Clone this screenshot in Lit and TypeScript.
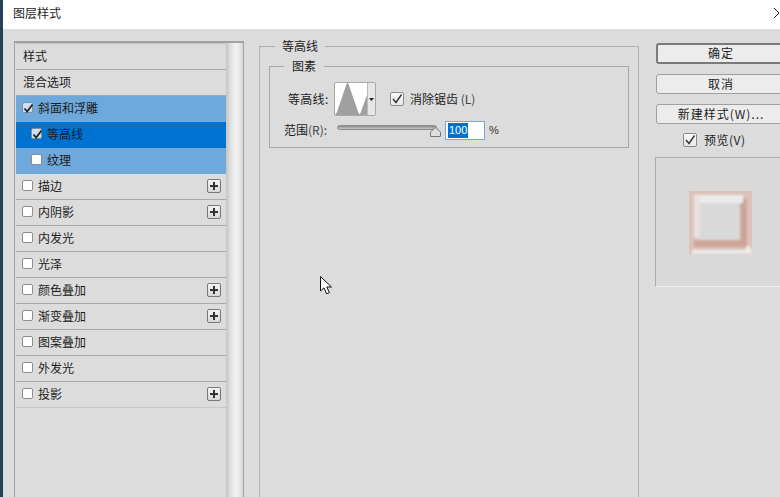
import { LitElement, html, css, svg } from "lit";
import { customElement } from "lit/decorators.js";

type Row = { label: string; check?: boolean; checked?: boolean; nested?: boolean; plus?: boolean; tone?: string };

const ROWS: Row[] = [
  { label: "样式" },
  { label: "混合选项" },
  { label: "斜面和浮雕", check: true, checked: true, tone: "sel" },
  { label: "等高线", check: true, checked: true, nested: true, tone: "active" },
  { label: "纹理", check: true, nested: true, tone: "sel" },
  { label: "描边", check: true, plus: true },
  { label: "内阴影", check: true, plus: true },
  { label: "内发光", check: true },
  { label: "光泽", check: true },
  { label: "颜色叠加", check: true, plus: true },
  { label: "渐变叠加", check: true, plus: true },
  { label: "图案叠加", check: true },
  { label: "外发光", check: true },
  { label: "投影", check: true, plus: true },
];

const tick = svg`<path d="M2.5 6.5 L5.2 9.5 L10.5 2.5" fill="none" stroke="#222" stroke-width="1.8"/>`;

@customElement("app-root")
export class AppRoot extends LitElement {
  static styles = css`
    :host {
      display: flex;
      width: 780px;
      height: 497px;
      overflow: hidden;
      position: relative;
      font: 12px/16px "Noto Sans CJK SC", "Liberation Sans", sans-serif;
      color: #1c1c1c;
      background: #dcdcdc;
    }
    .strip { width: 3px; flex: none; background: #24405c; }
    .main { flex: 1; min-width: 0; display: flex; flex-direction: column; }
    .title {
      height: 29px; flex: none; background: #fff; display: flex; align-items: center;
      justify-content: space-between; padding-left: 10px; padding-bottom: 3px; box-sizing: border-box;
    }
    .close { width: 6px; height: 12px; flex: none; }
    .body { flex: 1; display: flex; align-items: stretch; padding: 12px 0 0 11px; min-height: 0; }

    .list {
      width: 230px; flex: none; box-sizing: border-box; border: solid #a2a2a2; border-width: 2px 1px 0 1px;
      padding-left: 1px; display: flex; background: #dcdcdc;
    }
    .rows { width: 210px; flex: none; border-top: 1px solid #c2c2c2; }
    .scroll { flex: 1; background: linear-gradient(90deg, #c4c4c4 0, #dedede 25%, #f2f2f2 55%, #e4e4e4 85%, #d4d4d4 100%); }
    .row {
      height: 26px; box-sizing: border-box; border-bottom: 1px solid #a8a8a8;
      display: flex; align-items: center; padding: 0 5px 2px 6px; gap: 5px;
    }
    .row:last-child { border-bottom-color: #c8c8c8; }
    .row.nested { padding-left: 15px; }
    .row.plain { padding-left: 7px; }
    .row.sel { background: #6fa8da; border-bottom-color: #6fa8da; }
    .row.sel.top { border-bottom-color: #8aa6c0; }
    .row.active { background: #0072d2; border-bottom-color: #0072d2; }
    .row .lbl { flex: 1; }
    .cb {
      width: 11px; height: 11px; flex: none; box-sizing: border-box; border: 1px solid #8e8e8e; border-radius: 2px;
      background: #fff; display: flex;
    }
    .cb.on { background: #cfe0f2; border-color: #7e8fa2; }
    .cb svg { width: 11px; height: 11px; margin: -1px; flex: none; }
    .plus {
      width: 14px; height: 14px; flex: none; box-sizing: border-box; border: 1px solid #777; border-radius: 2px;
      background: linear-gradient(#f4f4f4, #d6d6d6); display: flex; align-items: center; justify-content: center;
    }
    .plus svg { width: 8px; height: 8px; }

    .panel { width: 380px; margin-left: 15px; flex: none; }
    fieldset { margin: 0; min-width: 0; box-sizing: border-box; border: 1px solid #b0b0b0; }
    .outer { height: 600px; margin-top: -3px; padding: 4px 9px 0; }
    .outer legend { margin-left: 6px; padding: 0 7px; height: 16px; }
    .inner { height: 90px; padding: 0 0 0 14px; border-color: #a8a8a8; }
    .inner legend { margin-left: 0; padding: 0 8px; height: 16px; }
    .line1 { display: flex; align-items: center; height: 34px; margin-top: 8px; }
    .lab1 { width: 41px; margin-left: 4px; letter-spacing: 0.3px; }
    .swatch {
      width: 42px; height: 34px; margin-left: 5px; box-sizing: border-box; border: 1px solid #a8a8a8; border-radius: 2px;
      display: flex; background: #fff; flex: none;
    }
    .swatch .g { width: 32px; height: 32px; flex: none; }
    .swatch .arrow { flex: 1; background: #e6e6e6; display: flex; align-items: center; justify-content: center; border-left: 1px solid #bbb; }
    .tri { width: 5px; height: 3px; flex: none; }
    .big {
      width: 14px; height: 14px; flex: none; box-sizing: border-box; border: 1px solid #8a8a8a; border-radius: 2px;
      background: linear-gradient(#fafafa, #e8e8e8); display: flex;
    }
    .big svg { width: 12px; height: 12px; }
    .aa { display: flex; align-items: center; gap: 6px; margin-left: 14px; }
    .latin { color: #444; }
    .line2 { display: flex; align-items: center; height: 20px; margin-top: 4px; }
    .lab2 { width: 53px; }
    .slider { width: 104px; height: 15px; flex: none; position: relative; }
    .track {
      position: absolute; left: 0; right: 4px; top: 2px; height: 5px; border-radius: 3px; box-sizing: border-box;
      background: linear-gradient(#8a8a8a, #c4c4c4); border: 1px solid #8c8c8c;
    }
    .thumb { position: absolute; right: 0; top: 4px; width: 11px; height: 10px; }
    .num {
      width: 40px; height: 19px; margin-left: 4px; flex: none; box-sizing: border-box; border: 1px solid #7fa6cc;
      background: #fff; padding: 1px 0 0 2px; line-height: 15px; font-family: "Liberation Sans", sans-serif; font-size: 11px;
    }
    .num span { background: #0072d2; color: #fff; display: inline-block; padding: 0 1px; }
    .pct { margin-left: 4px; font-family: "Liberation Sans", sans-serif; font-size: 11px; color: #333; }

    .side { margin-left: 17px; width: 130px; flex: none; display: flex; flex-direction: column; margin-top: 2px; }
    .btn {
      height: 20px; box-sizing: border-box; border: 1px solid #a0a0a0; border-radius: 3px; background: #ececec;
      display: flex; align-items: center; justify-content: center; letter-spacing: 1px; margin-bottom: 10px; padding-bottom: 1px;
    }
    .btn.def { height: 21px; border: 2px solid #7a7a7a; }
    .pv { display: flex; align-items: center; gap: 7px; padding-left: 27px; height: 14px; margin-top: -1px; letter-spacing: 0.5px; }
    .box {
      margin: 10px 0 0 -1px; width: 129px; height: 130px; box-sizing: border-box; background: #d9d9d9; flex: none;
      border: solid #ababab; border-width: 1px 0 1px 1px; border-bottom-color: #efefef;
      display: flex; align-items: center; justify-content: center;
    }
    .box svg { width: 63px; height: 63px; flex: none; }
    .cursor { position: absolute; left: 320px; top: 276px; width: 13px; height: 19px; }
  `;

  private row(r: Row, i: number) {
    const cls = ["row"];
    if (r.nested) cls.push("nested");
    if (!r.check) cls.push("plain");
    if (r.tone) cls.push(r.tone);
    if (i === 2) cls.push("top");
    return html`<div class=${cls.join(" ")}>
      ${r.check
        ? html`<span class="cb ${r.checked ? "on" : ""}">${r.checked ? html`<svg viewBox="0 0 11 11">${tick}</svg>` : ""}</span>`
        : ""}
      <span class="lbl">${r.label}</span>
      ${r.plus
        ? html`<span class="plus"><svg viewBox="0 0 8 8"><path d="M4 0V8M0 4H8" stroke="#333" stroke-width="2"/></svg></span>`
        : ""}
    </div>`;
  }

  render() {
    return html`
      <div class="strip"></div>
      <div class="main">
        <div class="title">
          <span>图层样式</span>
          <svg class="close" viewBox="0 0 6 12"><path d="M0 1 L5 6 L0 11" fill="none" stroke="#222"/></svg>
        </div>
        <div class="body">
          <div class="list">
            <div class="rows">${ROWS.map((r, i) => this.row(r, i))}</div>
            <div class="scroll"></div>
          </div>
          <div class="panel">
            <fieldset class="outer">
              <legend>等高线</legend>
              <fieldset class="inner">
                <legend>图素</legend>
                <div class="line1">
                  <span class="lab1">等高线:</span>
                  <div class="swatch">
                    <svg class="g" viewBox="0 0 32 32"><path d="M0 32 L2 29 L11.5 1 Q12.5 -1 13.5 1 L23.5 30 Q24.5 32 25.5 30 L32 12 V32 Z" fill="#a0a0a0"/></svg>
                    <div class="arrow"><svg class="tri" viewBox="0 0 5 3"><path d="M0 0H5L2.5 3Z" fill="#222"/></svg></div>
                  </div>
                  <div class="aa">
                    <span class="big"><svg viewBox="0 0 12 12"><path d="M2 6 L5 9.5 L10.5 1.5" fill="none" stroke="#333" stroke-width="1.4"/></svg></span>
                    <span>消除锯齿 <span class="latin">(L)</span></span>
                  </div>
                </div>
                <div class="line2">
                  <span class="lab2">范围<span class="latin">(R):</span></span>
                  <div class="slider">
                    <div class="track"></div>
                    <svg class="thumb" viewBox="0 0 11 10"><path d="M5.5 .5 L10.5 5 V9.5 H.5 V5 Z" fill="#dedede" stroke="#777"/></svg>
                  </div>
                  <div class="num"><span>100</span></div>
                  <span class="pct">%</span>
                </div>
              </fieldset>
            </fieldset>
          </div>
          <div class="side">
            <div class="btn def">确定</div>
            <div class="btn">取消</div>
            <div class="btn">新建样式(W)...</div>
            <div class="pv">
              <span class="big"><svg viewBox="0 0 12 12"><path d="M2 6 L5 9.5 L10.5 1.5" fill="none" stroke="#333" stroke-width="1.4"/></svg></span>
              <span>预览(V)</span>
            </div>
            <div class="box">
              <svg viewBox="0 0 63 63">
                <defs>
                  <filter id="b" x="-20%" y="-20%" width="140%" height="140%"><feGaussianBlur stdDeviation="1.1"/></filter>
                  <clipPath id="c"><rect width="63" height="63"/></clipPath>
                </defs>
                <g clip-path="url(#c)">
                  <rect width="63" height="63" fill="#ddc2ba"/>
                  <g filter="url(#b)">
                    <rect x="3" y="3" width="56" height="56" fill="#ddc2ba"/>
                    <rect x="9" y="11" width="42" height="38" fill="#d9d9d9"/>
                    <path d="M51 8 H58 V56 H5 V49 H51 Z" fill="#cfa599"/>
                    <rect x="5" y="4" width="49" height="8" fill="#ebebeb"/>
                    <rect x="5" y="6" width="6" height="41" fill="#e4e2e1"/>
                    <path d="M3 59 H56 L59 54 L63 59 V63 H3 Z" fill="#ececec"/>
                  </g>
                </g>
              </svg>
            </div>
          </div>
        </div>
      </div>
      <svg class="cursor" viewBox="0 0 13 19">
        <path d="M.5 .5 V15 L4 11.8 L6.6 17.8 L9.4 16.6 L6.8 11 H11.5 Z" fill="#fff" stroke="#111"/>
      </svg>
    `;
  }
}
